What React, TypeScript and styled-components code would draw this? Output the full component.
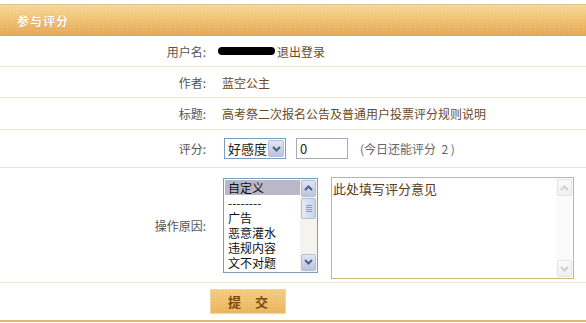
import React from "react";
import styled, { createGlobalStyle } from "styled-components";

const Global = createGlobalStyle`
  html, body { margin: 0; padding: 0; background: #fff; }
  body { font-family: "Noto Sans CJK SC", "Liberation Sans", sans-serif; font-size: 12px; }
  * { box-sizing: border-box; }
`;

const Panel = styled.div`
  margin-top: 4px;
  width: 586px;
  border-top: 1px solid #dcc28a;
  border-bottom: 2px solid #e8b56a;
`;

const Header = styled.div`
  height: 31px;
  display: flex;
  align-items: center;
  padding-left: 17px;
  background:
    radial-gradient(circle, rgba(255,255,255,0.18) 0.6px, transparent 0.8px) 0 0 / 3px 3px,
    linear-gradient(#f7d896, #f0c070 50%, #e3a456);
  color: #fff;
  font-weight: bold;
  font-size: 12px;
  text-shadow: 0 0 1px rgba(160,90,20,0.6);
  letter-spacing: 1px;
`;

const Row = styled.div<{ $h: number; $last?: boolean }>`
  display: grid;
  grid-template-columns: 212px 1fr;
  height: ${(p) => p.$h}px;
  border-bottom: ${(p) => (p.$last ? "none" : "1px solid #f1e6d6")};
`;

const Label = styled.div`
  display: flex;
  align-items: center;
  justify-content: flex-end;
  padding-right: 6px;
  color: #555;
`;

const Value = styled.div`
  display: flex;
  align-items: center;
  gap: 10px;
  padding-left: 10px;
  color: #6a4a28;
`;

const Redacted = styled.span`
  display: inline-block;
  width: 57px;
  height: 8px;
  border-radius: 4px;
  background: #000;
  margin: 0 2px 0 -4px;
`;

const Inline = styled.span`
  display: inline-flex;
  align-items: center;
`;

const SelectBox = styled.div`
  display: flex;
  align-items: center;
  height: 21px;
  border: 1px solid #7f9db9;
  background: #fff;
  color: #222;
  font-size: 13px;
  padding-left: 3px;
  margin-left: 2px;
`;

const XpButton = styled.div<{ $w?: number; $h?: number; $faded?: boolean }>`
  width: ${(p) => p.$w ?? 17}px;
  height: ${(p) => p.$h ?? 17}px;
  margin: 1px;
  border: 1px solid ${(p) => (p.$faded ? "#e4e4e4" : "#b4c0d8")};
  border-radius: 2px;
  background: ${(p) => (p.$faded ? "linear-gradient(#fafafa,#f0f0f0)" : "linear-gradient(#dfe6f4, #b9c4dc)")};
  display: flex;
  align-items: center;
  justify-content: center;
`;

const NumInput = styled.div`
  width: 52px;
  height: 21px;
  border: 1px solid #a5acb5;
  color: #222;
  font-size: 13px;
  padding-left: 3px;
  display: flex;
  align-items: center;
`;

const Hint = styled.span`
  color: #666;
  margin-left: 2px;
  white-space: pre;
`;

const ListBox = styled.div`
  width: 95px;
  height: 95px;
  border: 1px solid #7f9db9;
  display: flex;
  background: #fff;
  margin-left: 1px;
`;

const Options = styled.div`
  flex: 1;
  padding: 1px 0 0 1px;
  overflow: hidden;
  color: #111;
  font-size: 12px;
`;

const Option = styled.div<{ $sel?: boolean }>`
  height: 15px;
  line-height: 15px;
  padding-left: 3px;
  background: ${(p) => (p.$sel ? "#b8b8c8" : "transparent")};
`;

const ScrollTrack = styled.div<{ $faded?: boolean }>`
  width: 17px;
  display: flex;
  flex-direction: column;
  justify-content: space-between;
  background: ${(p) => (p.$faded ? "#fbfbfb" : "#f4f3ee")};
  position: relative;
`;

const Thumb = styled.div`
  position: absolute;
  top: 19px;
  left: 1px;
  width: 15px;
  height: 21px;
  border: 1px solid #b4c0d8;
  border-radius: 2px;
  background: linear-gradient(90deg, #e6ecf8, #c7d2ea);
  display: flex;
  flex-direction: column;
  align-items: center;
  justify-content: center;
  gap: 1px;
`;

const Grip = styled.div`
  width: 6px;
  height: 1px;
  background: #8c9ab8;
`;

const TextArea = styled.div`
  width: 243px;
  height: 102px;
  border: 1px solid #cbb578;
  display: flex;
  margin-left: 3px;
  align-self: flex-start;
  margin-top: 9px;
`;

const TextContent = styled.div`
  flex: 1;
  padding: 1px 0 0 1px;
  color: #5a3c1c;
  font-size: 13px;
`;

const Submit = styled.button`
  width: 76px;
  height: 25px;
  border: 1px solid #f2d69a;
  outline: 1px solid #fff;
  background:
    radial-gradient(circle, rgba(255,255,255,0.2) 0.6px, transparent 0.8px) 0 0 / 3px 3px,
    linear-gradient(#f3cb7e, #eab45c);
  color: #7b4a12;
  font-family: "Noto Sans CJK SC", sans-serif;
  font-weight: bold;
  font-size: 13px;
  letter-spacing: 14px;
  padding: 0 0 0 14px;
  margin-left: -12px;
  cursor: pointer;
`;

const Arrow = ({ dir, color = "#4d6185" }: { dir: "up" | "down"; color?: string }) => (
  <svg width="9" height="6" viewBox="0 0 9 6">
    <path
      d={dir === "down" ? "M1 1 L4.5 4.5 L8 1" : "M1 5 L4.5 1.5 L8 5"}
      fill="none"
      stroke={color}
      strokeWidth="2"
    />
  </svg>
);

export default function App() {
  return (
    <>
      <Global />
      <Panel>
        <Header>参与评分</Header>
        <Row $h={31}>
          <Label>用户名:</Label>
          <Value>
            <Inline>
              <Redacted />
              退出登录
            </Inline>
          </Value>
        </Row>
        <Row $h={31}>
          <Label>作者:</Label>
          <Value>蓝空公主</Value>
        </Row>
        <Row $h={32}>
          <Label>标题:</Label>
          <Value>高考祭二次报名公告及普通用户投票评分规则说明</Value>
        </Row>
        <Row $h={38}>
          <Label>评分:</Label>
          <Value>
            <SelectBox>
              好感度
              <XpButton $w={16} $h={17}>
                <Arrow dir="down" />
              </XpButton>
            </SelectBox>
            <NumInput>0</NumInput>
            <Hint>(今日还能评分  2 )</Hint>
          </Value>
        </Row>
        <Row $h={115}>
          <Label>操作原因:</Label>
          <Value>
            <ListBox>
              <Options>
                <Option $sel>自定义</Option>
                <Option>--------</Option>
                <Option>广告</Option>
                <Option>恶意灌水</Option>
                <Option>违规内容</Option>
                <Option>文不对题</Option>
              </Options>
              <ScrollTrack>
                <XpButton $w={15} $h={17}>
                  <Arrow dir="up" />
                </XpButton>
                <Thumb>
                  <Grip />
                  <Grip />
                  <Grip />
                  <Grip />
                </Thumb>
                <XpButton $w={15} $h={17}>
                  <Arrow dir="down" />
                </XpButton>
              </ScrollTrack>
            </ListBox>
            <TextArea>
              <TextContent>此处填写评分意见</TextContent>
              <ScrollTrack $faded>
                <XpButton $faded $w={15} $h={17}>
                  <Arrow dir="up" color="#cfcfcf" />
                </XpButton>
                <XpButton $faded $w={15} $h={17}>
                  <Arrow dir="down" color="#cfcfcf" />
                </XpButton>
              </ScrollTrack>
            </TextArea>
          </Value>
        </Row>
        <Row $h={37} $last>
          <div />
          <Value>
            <Submit>提交</Submit>
          </Value>
        </Row>
      </Panel>
    </>
  );
}
